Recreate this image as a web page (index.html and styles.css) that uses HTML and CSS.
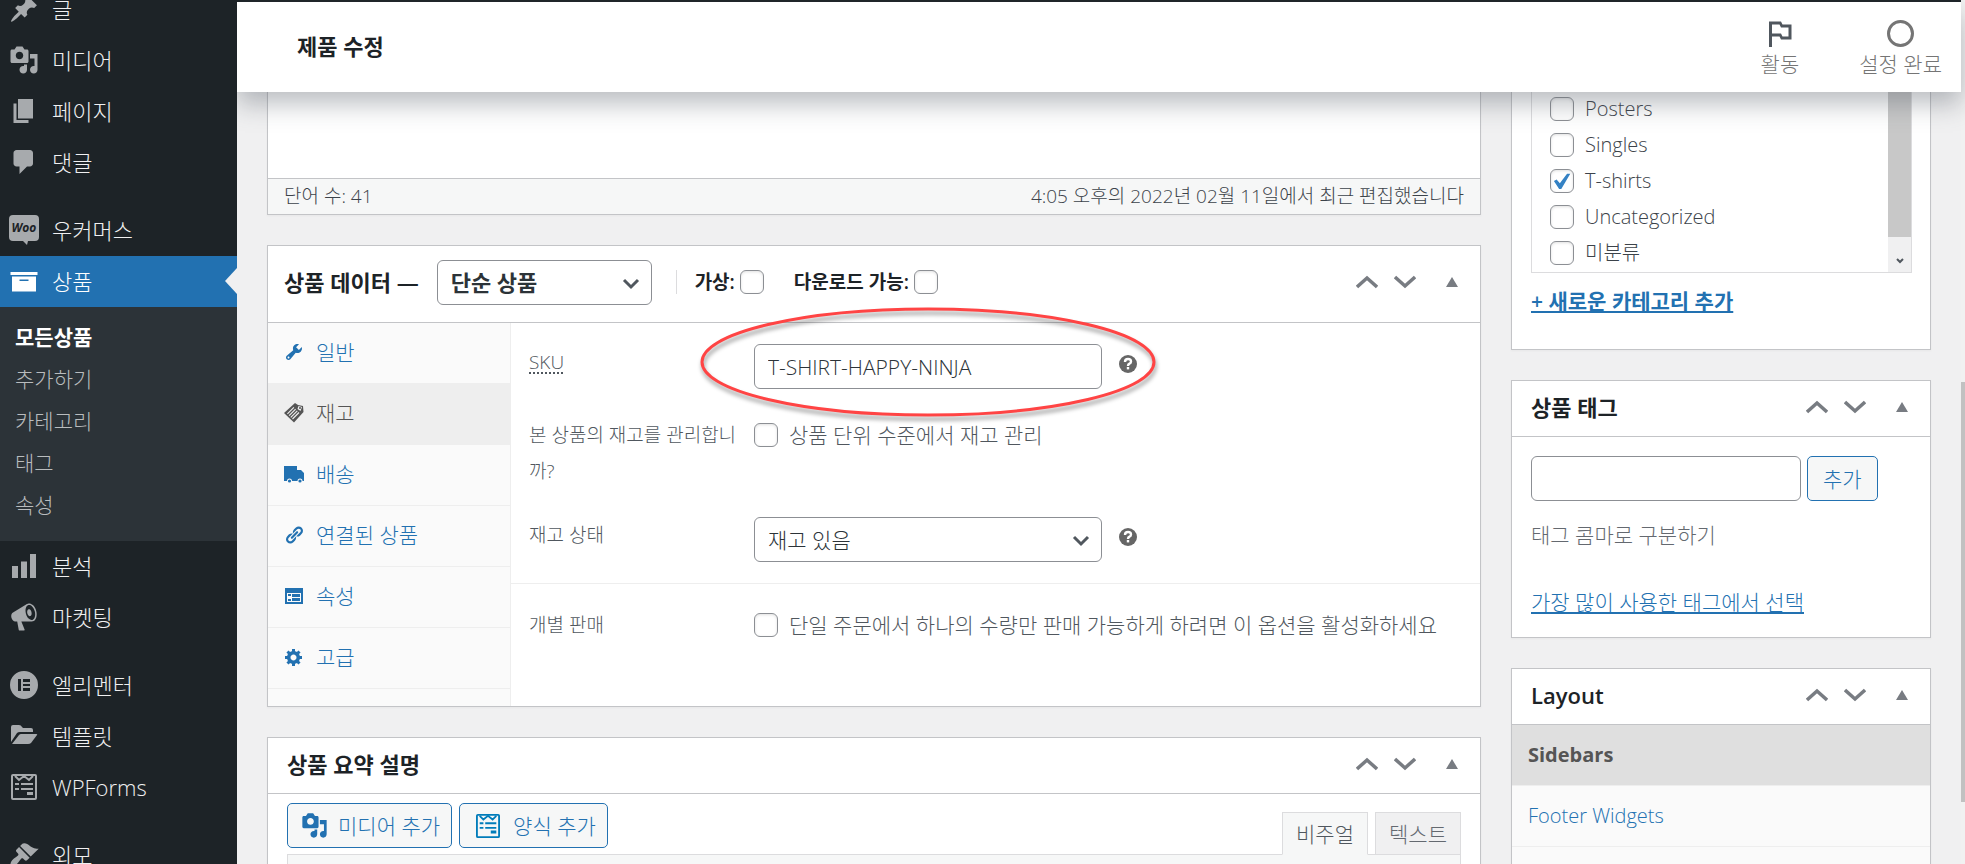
FILE: index.html
```html
<!DOCTYPE html>
<html lang="ko">
<head>
    <meta charset="UTF-8">
    <meta name="viewport" content="width=device-width, initial-scale=1.0">
    <title>제품 수정</title>
    <link rel="stylesheet" href="styles.css">
</head>
<body>
    <svg class="sprite" aria-hidden="true">
        <symbol id="media" viewBox="0 0 20 20"><path d="M13 11V4c0-.55-.45-1-1-1h-1.67L9 1H5L3.67 3H2c-.55 0-1 .45-1 1v7c0 .55.45 1 1 1h10c.55 0 1-.45 1-1zM7 4.5c1.38 0 2.5 1.12 2.5 2.5S8.38 9.5 7 9.5 4.5 8.38 4.5 7 5.62 4.5 7 4.5zM14 6h5v10.5c0 1.38-1.12 2.5-2.5 2.5S14 17.88 14 16.5s1.12-2.5 2.5-2.5c.17 0 .34.02.5.05V9h-3V6zm-4 8.05V13h2v3.5c0 1.38-1.12 2.5-2.5 2.5S7 17.88 7 16.5 8.12 14 9.5 14c.17 0 .34.02.5.05z"/></symbol>
        <symbol id="form" viewBox="0 0 26 26"><path fill="none" stroke="currentColor" stroke-width="2" d="M2 1h22q1 0 1 1v22q0 1-1 1H2q-1 0-1-1V2q0-1 1-1z"/><path fill="none" stroke="currentColor" stroke-width="2" d="M4 2l4 4 5-4 5 4 4-4"/><path d="M4 9h4v2H4zm6 0h12v2H10zM4 14h4v2H4zm6 0h12v2H10zm6 4h6v3h-6z"/></symbol>
        <symbol id="up" viewBox="0 0 22 14"><path fill="none" stroke="currentColor" stroke-width="3.500" d="M1 12l10-9 10 9"/></symbol>
        <symbol id="down" viewBox="0 0 22 14"><path fill="none" stroke="currentColor" stroke-width="3.500" d="M1 2l10 9 10-9"/></symbol>
        <symbol id="toggle" viewBox="0 0 12 10"><path d="M6 0l6 10H0z"/></symbol>
        <symbol id="arrow" viewBox="0 0 18 12"><path fill="none" stroke="currentColor" stroke-width="3" d="M2 2l7 7 7-7"/></symbol>
        <symbol id="help" viewBox="0 0 18 18"><circle cx="9" cy="9" r="9"/><path fill="none" stroke="#fff" stroke-width="2.400" d="M6 7q0-3 3-3t3 2.500q0 1.500-1.500 2.200T9 11"/><path fill="#fff" d="M7.800 12h2.400v2.400H7.800z"/></symbol>
    </svg>

    <nav class="menu">
        <ul class="menu-list">
            <li><a href="#"><svg class="icon" viewBox="0 0 20 20"><path d="M10.440 3.020l1.820-1.820 6.360 6.350-1.830 1.820c-1.050-.68-2.480-.57-3.410.36l-.75.75c-.92.93-1.040 2.350-.35 3.410l-1.830 1.820-2.410-2.410-2.800 2.790c-.42.42-3.380 2.710-3.800 2.290s1.860-3.390 2.280-3.810l2.790-2.790L4.100 9.360l1.830-1.820c1.050.69 2.480.57 3.400-.36l.75-.75c.93-.92 1.050-2.350.36-3.410z"/></svg>글</a></li>
            <li><a href="#"><svg class="icon"><use href="#media"/></svg>미디어</a></li>
            <li><a href="#"><svg class="icon" viewBox="0 0 20 20"><path d="M6 15V2h10v13H6zm-1 1h8v2H3V5h2v11z"/></svg>페이지</a></li>
            <li><a href="#"><svg class="icon" viewBox="0 0 20 20"><path d="M5 2h9c1.100 0 2 .9 2 2v7c0 1.100-.9 2-2 2h-2l-5 5v-5H5c-1.100 0-2-.9-2-2V4c0-1.100.9-2 2-2z"/></svg>댓글</a></li>
            <li class="separator"></li>
            <li><a href="#"><svg class="icon" viewBox="0 0 30 30"><path d="M4 0h22q4 0 4 4v18q0 4-4 4h-7l-1 4-4-4H4q-4 0-4-4V4q0-4 4-4z"/><text class="woo" x="15" y="17" text-anchor="middle">Woo</text></svg>우커머스</a></li>
            <li class="current">
                <a href="#"><svg class="icon" viewBox="0 0 20 20"><path d="M19 4v2H1V4h18zM2 7h16v10H2V7zm11 3V9H7v1h6z"/></svg>상품</a>
                <ul class="submenu">
                    <li><a class="active" href="#">모든상품</a></li>
                    <li><a href="#">추가하기</a></li>
                    <li><a href="#">카테고리</a></li>
                    <li><a href="#">태그</a></li>
                    <li><a href="#">속성</a></li>
                </ul>
            </li>
            <li><a href="#"><svg class="icon" viewBox="0 0 20 20"><path d="M18 18V2h-4v16h4zm-6 0V7H8v11h4zm-6 0v-8H2v8h4z"/></svg>분석</a></li>
            <li><a href="#"><svg class="icon" viewBox="0 0 20 20"><path fill-rule="evenodd" d="M18.150 5.940c.46 1.620.38 3.220-.02 4.480-.42 1.280-1.260 2.180-2.300 2.480-.16.06-.26.06-.4.06-.06.02-.12.02-.18.02-.06.02-.14.02-.22.02h-6.800l2.220 5.500c.02.14-.06.26-.14.34-.08.1-.24.16-.34.16H6.950c-.1 0-.26-.06-.34-.16-.08-.08-.16-.2-.14-.34l-1-5.500H4.250l-.02-.02c-.5.06-1.080-.18-1.540-.62s-.88-1.080-1.060-1.880c-.24-.8-.2-1.560-.02-2.200.18-.62.58-1.080 1.060-1.300l.02-.02 9-5.400c.1-.06.18-.1.24-.16.06-.04.14-.08.24-.12.16-.08.28-.12.5-.18 1.040-.3 2.240.1 3.220.98s1.840 2.240 2.260 3.860zm-2.580 5.980h-.02c.4-.1.74-.34 1.040-.7.58-.7.86-1.760.86-3.040 0-.64-.1-1.300-.28-1.980-.34-1.360-1.020-2.500-1.780-3.240s-1.680-1.100-2.460-.88c-.82.22-1.400.96-1.700 2-.32 1.040-.28 2.360.06 3.720.38 1.360 1 2.500 1.800 3.240.78.74 1.620 1.100 2.480.88zm-2.540-7.080c.22-.04.42-.02.62.04.38.16.76.48 1.020 1s.42 1.200.42 1.780c0 .3-.04.56-.12.8-.18.48-.44.84-.86.94-.34.1-.8-.06-1.140-.4s-.64-.86-.78-1.500c-.18-.62-.12-1.240.02-1.720s.48-.84.82-.94z"/></svg>마켓팅</a></li>
            <li class="separator"></li>
            <li><a href="#"><svg class="icon" viewBox="0 0 30 30"><path fill-rule="evenodd" d="M15 1a14 14 0 1 1 0 28 14 14 0 0 1 0-28zM9 9v12h3V9zm5 0v3h7V9zm0 5v2h7v-2zm0 4v3h7v-3z"/></svg>엘리멘터</a></li>
            <li><a href="#"><svg class="icon" viewBox="0 0 30 30"><path d="M2 21V6q0-2 2-2h6q2 0 3 2l1 1h8q2 0 2 2v2H11q-2 0-3 1z"/><path d="M3 23l7-9q1-1 2-1h15q2 0 1 1l-6 8q-1 1-3 1z"/></svg>템플릿</a></li>
            <li><a href="#"><svg class="icon icon-form"><use href="#form"/></svg>WPForms</a></li>
            <li class="separator"></li>
            <li><a href="#"><svg class="icon" viewBox="0 0 20 20"><path d="M14.480 11.060L7.410 3.990l1.500-1.500c.5-.56 2.300-.47 3.510.32 1.210.8 1.430 1.280 2.910 2.100 1.180.64 2.450 1.260 4.450.85zm-.71.71L6.700 4.700 4.930 6.470c-.39.39-.39 1.020 0 1.410l1.060 1.060c.39.39.39 1.030 0 1.420-.6.6-1.430 1.110-2.210 1.690-.35.26-.7.53-1.010.84C1.430 14.230.4 16.080 1.400 17.070c.99 1 2.840-.03 4.180-1.360.31-.31.58-.66.85-1.020.57-.78 1.080-1.610 1.690-2.210.39-.39 1.020-.39 1.410 0l1.060 1.060c.39.39 1.020.39 1.410 0z"/></svg>외모</a></li>
        </ul>
    </nav>

    <div class="page">
        <header class="header">
            <h1>제품 수정</h1>
            <div class="header-tabs">
                <button type="button"><svg class="flag" viewBox="3 3 18 18"><path d="M14 6l-1-2H5v17h2v-7h5l1 2h7V6h-6zm4 8h-4l-1-2H7V6h5l1 2h5v6z"/></svg>활동</button>
                <button type="button"><svg class="ring" viewBox="0 0 27 27"><circle cx="13.500" cy="13.500" r="12" fill="none" stroke="currentColor" stroke-width="3"/></svg>설정 완료</button>
            </div>
        </header>

        <div class="content">
            <main class="main">
                <section class="box editor">
                    <div class="editor-text"></div>
                    <div class="editor-status">
                        <span>단어 수: 41</span>
                        <span>4:05 오후의 2022년 02월 11일에서 최근 편집했습니다</span>
                    </div>
                </section>

                <section class="box">
                    <div class="box-head product-head">
                        <label class="product-type">상품 데이터 —
                            <span class="select">
                                <select><option>단순 상품</option></select>
                                <svg><use href="#arrow"/></svg>
                            </span>
                        </label>
                        <div class="type-options">
                            <label>가상:<input type="checkbox"></label>
                            <label>다운로드 가능:<input type="checkbox"></label>
                        </div>
                        <div class="actions">
                            <button type="button" aria-label="위로"><svg><use href="#up"/></svg></button>
                            <button type="button" aria-label="아래로"><svg><use href="#down"/></svg></button>
                            <button type="button" class="toggle" aria-label="접기"><svg><use href="#toggle"/></svg></button>
                        </div>
                    </div>
                    <div class="product-data">
                        <ul class="tabs">
                            <li><a href="#"><svg viewBox="0 0 20 20"><path fill-rule="evenodd" d="M16.680 9.770c-1.340 1.340-3.300 1.670-4.950.99l-5.410 6.520c-.99.99-2.590.99-3.580 0s-.99-2.590 0-3.570l6.520-5.420c-.68-1.650-.35-3.610.99-4.950 1.280-1.280 3.120-1.620 4.720-1.060l-2.890 2.890 2.820 2.820 2.860-2.870c.53 1.580.18 3.390-1.080 4.650zM3.810 16.210c.4.39 1.040.39 1.430 0 .4-.4.4-1.040 0-1.430-.39-.4-1.030-.4-1.430 0-.39.39-.39 1.030 0 1.430z"/></svg>일반</a></li>
                            <li class="active"><a href="#"><svg viewBox="0 0 20 20"><path fill-rule="evenodd" d="M11 0l3 2 5 1 .5 6L10 19.500 0 10zM9.500 4L3 10.500l.8.8L10.300 4.800zm1.700 1.700l-6.500 6.500.8.8L12 6.500zm1.700 1.700l-6.500 6.500.8.8 6.500-6.500zm1.700 1.700l-6.500 6.500.8.8 6.500-6.500zM14.500 3l-1 3 3 2 1.500-4z"/><circle cx="16" cy="5" r="1"/></svg>재고</a></li>
                            <li><a href="#"><svg viewBox="0 0 20 20"><path d="M0 2h13v4h4l3 3v8h-1.500a2.500 2.500 0 0 0-5 0H8a2.500 2.500 0 0 0-5 0H0z"/><circle cx="5.500" cy="17" r="1.600"/><circle cx="16" cy="17" r="1.600"/></svg>배송</a></li>
                            <li><a href="#"><svg viewBox="0 0 20 20"><path d="M17.740 2.760c1.680 1.690 1.680 4.410 0 6.100l-1.530 1.520c-1.120 1.120-2.700 1.470-4.140 1.090l2.620-2.610.76-.77.76-.76c.84-.84.84-2.200 0-3.040-.84-.85-2.200-.85-3.040 0l-.77.76-3.380 3.380c-.37-1.440-.02-3.020 1.100-4.140l1.520-1.530c1.690-1.680 4.420-1.680 6.100 0zM8.590 13.430l5.340-5.340c.42-.42.42-1.100 0-1.520-.44-.43-1.130-.39-1.530 0l-5.330 5.340c-.42.42-.42 1.100 0 1.520.44.43 1.130.39 1.520 0zm-.76 2.290l4.140-4.150c.38 1.440.03 3.020-1.090 4.140l-1.520 1.530c-1.690 1.680-4.410 1.680-6.100 0-1.680-1.680-1.680-4.420 0-6.100l1.530-1.520c1.120-1.120 2.700-1.470 4.140-1.100l-4.140 4.150c-.85.84-.85 2.200 0 3.050.84.84 2.200.84 3.040 0z"/></svg>연결된 상품</a></li>
                            <li><a href="#"><svg viewBox="0 0 20 20"><path fill-rule="evenodd" d="M1 2h18v16H1zM3 7v9h14V7z"/><path d="M4 8h3v2H4zm4 0h8v3H8zm-4 5h3v2H4zm4-1h8v3H8z"/></svg>속성</a></li>
                            <li><a href="#"><svg viewBox="0 0 20 20"><path fill-rule="evenodd" d="M18 12h-2.180c-.17.7-.44 1.350-.81 1.930l1.540 1.540-2.100 2.100-1.540-1.540c-.58.36-1.230.63-1.910.79V19H8v-2.180c-.68-.16-1.330-.43-1.910-.79l-1.540 1.540-2.120-2.120 1.540-1.540c-.36-.58-.63-1.230-.79-1.910H1V9.030h2.170c.16-.7.44-1.350.8-1.940L2.430 5.550l2.100-2.100 1.540 1.540c.58-.37 1.240-.64 1.930-.81V2h3v2.180c.68.16 1.330.43 1.910.79l1.540-1.540 2.120 2.120-1.540 1.540c.36.59.64 1.240.8 1.940H18V12zm-8.500 1.500c1.660 0 3-1.340 3-3s-1.340-3-3-3-3 1.340-3 3 1.340 3 3 3z"/></svg>고급</a></li>
                        </ul>
                        <div class="panel">
                            <div class="group">
                                <div class="field">
                                    <label for="sku"><abbr title="재고 유지 단위">SKU</abbr></label>
                                    <div class="control">
                                        <input type="text" id="sku" value="T-SHIRT-HAPPY-NINJA">
                                        <svg class="help"><use href="#help"/></svg>
                                        <svg class="mark" viewBox="0 0 460 120"><ellipse cx="230" cy="57" rx="226" ry="53"/></svg>
                                    </div>
                                </div>
                                <div class="field">
                                    <label for="manage">본 상품의 재고를 관리합니까?</label>
                                    <label class="check"><input type="checkbox" id="manage">상품 단위 수준에서 재고 관리</label>
                                </div>
                                <div class="field">
                                    <label for="stock">재고 상태</label>
                                    <div class="control">
                                        <span class="select">
                                            <select id="stock"><option>재고 있음</option></select>
                                            <svg><use href="#arrow"/></svg>
                                        </span>
                                        <svg class="help"><use href="#help"/></svg>
                                    </div>
                                </div>
                            </div>
                            <div class="group">
                                <div class="field">
                                    <label for="sold">개별 판매</label>
                                    <label class="check"><input type="checkbox" id="sold">단일 주문에서 하나의 수량만 판매 가능하게 하려면 이 옵션을 활성화하세요</label>
                                </div>
                            </div>
                        </div>
                    </div>
                </section>

                <section class="box">
                    <div class="box-head summary-head">
                        <h2>상품 요약 설명</h2>
                        <div class="actions">
                            <button type="button" aria-label="위로"><svg><use href="#up"/></svg></button>
                            <button type="button" aria-label="아래로"><svg><use href="#down"/></svg></button>
                            <button type="button" class="toggle" aria-label="접기"><svg><use href="#toggle"/></svg></button>
                        </div>
                    </div>
                    <div class="summary">
                        <div class="summary-tools">
                            <button type="button" class="button"><svg><use href="#media"/></svg>미디어 추가</button>
                            <button type="button" class="button button-form"><svg><use href="#form"/></svg>양식 추가</button>
                            <div class="modes">
                                <button type="button" class="active">비주얼</button>
                                <button type="button">텍스트</button>
                            </div>
                        </div>
                        <div class="summary-editor"></div>
                    </div>
                </section>
            </main>

            <aside class="side">
                <section class="box categories">
                    <div class="category-list">
                        <ul>
                            <li><label><input type="checkbox">Posters</label></li>
                            <li><label><input type="checkbox">Singles</label></li>
                            <li><label><input type="checkbox" checked>T-shirts</label></li>
                            <li><label><input type="checkbox">Uncategorized</label></li>
                            <li><label><input type="checkbox">미분류</label></li>
                        </ul>
                        <div class="list-scroll">
                            <div class="list-thumb"></div>
                            <svg viewBox="0 0 8 6"><path fill="none" stroke="currentColor" stroke-width="2" d="M1 1l3 3 3-3"/></svg>
                        </div>
                    </div>
                    <a class="add-category" href="#">+ 새로운 카테고리 추가</a>
                </section>

                <section class="box">
                    <div class="box-head">
                        <h2>상품 태그</h2>
                        <div class="actions">
                            <button type="button" aria-label="위로"><svg><use href="#up"/></svg></button>
                            <button type="button" aria-label="아래로"><svg><use href="#down"/></svg></button>
                            <button type="button" class="toggle" aria-label="접기"><svg><use href="#toggle"/></svg></button>
                        </div>
                    </div>
                    <div class="tags">
                        <div class="tag-add">
                            <input type="text" aria-label="상품 태그">
                            <button type="button" class="button">추가</button>
                        </div>
                        <p>태그 콤마로 구분하기</p>
                        <a href="#">가장 많이 사용한 태그에서 선택</a>
                    </div>
                </section>

                <section class="box">
                    <div class="box-head">
                        <h2>Layout</h2>
                        <div class="actions">
                            <button type="button" aria-label="위로"><svg><use href="#up"/></svg></button>
                            <button type="button" aria-label="아래로"><svg><use href="#down"/></svg></button>
                            <button type="button" class="toggle" aria-label="접기"><svg><use href="#toggle"/></svg></button>
                        </div>
                    </div>
                    <ul class="layout-list">
                        <li class="active"><a href="#">Sidebars</a></li>
                        <li><a href="#">Footer Widgets</a></li>
                        <li></li>
                    </ul>
                </section>
            </aside>
        </div>
    </div>

    <div class="scrollbar"><div class="thumb"></div></div>
</body>
</html>
```

FILE: styles.css
```css
* { box-sizing: border-box; }
body { margin: 0; display: flex; height: 100vh; overflow: hidden; background: #f0f0f1; color: #3c434a; font-family: "Open Sans", "Noto Sans CJK KR", sans-serif; font-size: 21px; font-weight: 300; line-height: 36px; }
h1, h2, p, ul { margin: 0; padding: 0; }
ul { list-style: none; }
a { color: #2271b1; }
svg { fill: currentColor; flex: none; }
button, input, select { font: inherit; color: inherit; margin: 0; }
button { cursor: pointer; }
.sprite { position: absolute; width: 0; height: 0; }

/* menu */
.menu { position: relative; z-index: 3; width: 237px; flex: none; background: #1d2327; overflow: hidden; }
.menu-list { margin-top: -16px; }
.menu-list a { display: flex; align-items: center; gap: 13px; height: 51px; padding: 0 0 2px 9px; color: #f0f0f1; font-size: 22px; text-decoration: none; }
.icon { width: 30px; height: 30px; color: #a7aaad; }
.icon-form { padding: 2px; }
.woo { font-size: 12px; font-weight: 700; font-style: italic; fill: #1d2327; }
.separator { height: 17px; }
.current > a { position: relative; background: #2271b1; color: #fff; }
.current > a .icon { color: #fff; }
.current > a::after { content: ""; position: absolute; right: 0; top: 12px; border: 13px solid transparent; border-left: 0; border-right: 12px solid #f0f0f1; }
.submenu { background: #2c3338; padding: 10px 0 14px; }
.submenu a { height: 42px; padding-left: 15px; color: #b9bcbe; font-size: 21px; }
.submenu a.active { color: #fff; font-weight: 700; }

/* header */
.page { flex: 1; min-width: 0; display: flex; flex-direction: column; border-top: 2px solid #1d2327; }
.header { position: relative; z-index: 2; flex: none; display: flex; justify-content: space-between; align-items: center; height: 90px; padding: 0 19px 2px 60px; background: #fff; box-shadow: 0 12px 24px rgba(85, 93, 102, .4); }
.header h1 { font-size: 22px; font-weight: 600; color: #1d2327; }
.header-tabs { display: flex; gap: 60px; padding-top: 6px; }
.header-tabs button { display: flex; flex-direction: column; align-items: center; gap: 3px; padding: 0; border: 0; background: none; color: #757575; line-height: 28px; }
.flag { width: 27px; height: 27px; color: #50575e; }
.ring { width: 27px; height: 27px; }

/* boxes */
.content { flex: 1; min-height: 0; display: flex; gap: 30px; padding: 0 30px; }
.main { flex: 1; min-width: 0; display: flex; flex-direction: column; gap: 30px; }
.side { width: 420px; flex: none; display: flex; flex-direction: column; gap: 30px; }
.box { flex: none; background: #fff; border: 1px solid #c3c4c7; box-shadow: 0 1px 2px rgba(0, 0, 0, .04); }
.box-head { display: flex; align-items: center; height: 56px; padding: 0 0 4px 19px; border-bottom: 1px solid #c3c4c7; }
.box-head h2 { font-size: 22px; font-weight: 600; color: #1d2327; }
.actions { display: flex; margin-left: auto; color: #787c82; }
.actions button { display: flex; align-items: center; justify-content: center; width: 38px; height: 36px; padding: 0; border: 0; background: none; }
.actions button.toggle { width: 56px; }
.actions svg { width: 22px; height: 14px; }
.actions .toggle svg { width: 12px; height: 10px; }

input[type=text], select { height: 45px; padding: 0 13px; border: 1px solid #8c8f94; border-radius: 6px; background: #fff; color: #2c3338; }
input[type=checkbox] { appearance: none; flex: none; width: 24px; height: 24px; border: 1px solid #8c8f94; border-radius: 6px; background: #fff; box-shadow: inset 0 1px 3px rgba(0, 0, 0, .12); }
input[type=checkbox]:checked::before { content: ""; display: block; width: 18px; height: 18px; margin: 2px; background: #3582c4; clip-path: polygon(5% 50%, 20% 42%, 38% 62%, 78% 10%, 96% 10%, 46% 94%, 34% 94%); }
.select { position: relative; display: block; }
.select select { appearance: none; display: block; width: 100%; }
.select svg { position: absolute; right: 12px; top: 18px; width: 18px; height: 12px; color: #50575e; pointer-events: none; }
.button { display: flex; align-items: center; height: 45px; padding: 0 15px; border: 1px solid #2271b1; border-radius: 5px; background: #f6f7f7; color: #2271b1; }

/* editor */
.editor { border-top: 0; }
.editor-text { height: 86px; }
.editor-status { display: flex; justify-content: space-between; padding: 0 16px; border-top: 1px solid #c3c4c7; background: #f6f7f7; font-size: 19px; line-height: 35px; }

/* product data */
.product-head { height: 77px; padding-left: 16px; }
.product-type { display: flex; align-items: center; gap: 18px; font-size: 22px; font-weight: 600; color: #1d2327; }
.product-type .select { width: 215px; }
.type-options { display: flex; align-items: center; gap: 30px; height: 24px; margin-left: 24px; padding-left: 18px; border-left: 1px solid #dcdcde; font-size: 19px; font-weight: 600; color: #1d2327; }
.type-options label { display: flex; align-items: center; gap: 5px; }
.product-data { display: flex; }
.tabs { width: 243px; flex: none; padding-bottom: 17px; background: #fafafa; border-right: 1px solid #eee; }
.tabs a { display: flex; align-items: center; gap: 12px; height: 61px; padding: 0 0 2px 16px; border-bottom: 1px solid #eee; text-decoration: none; }
.tabs svg { width: 20px; height: 20px; }
.tabs .active a { background: #eee; color: #555; }
.panel { flex: 1; min-width: 0; }
.group { padding: 7px 18px; }
.group + .group { padding-top: 9px; border-top: 1px solid #eee; }
.field { display: grid; grid-template-columns: 215px 1fr; column-gap: 10px; align-items: start; padding: 14px 0; font-size: 19px; color: #50575e; }
.field abbr { text-decoration: underline dotted; text-decoration-thickness: 2px; text-underline-offset: 3px; }
.control { position: relative; display: flex; gap: 17px; font-size: 21px; }
.control input, .control .select { width: 348px; }
.check { display: flex; align-items: center; gap: 11px; font-size: 21px; }
.help { width: 18px; height: 18px; margin-top: 11px; color: #666; }
.mark { position: absolute; left: -56px; top: -39px; width: 460px; height: 120px; fill: none; stroke: #ff4444; stroke-width: 3px; filter: drop-shadow(1px 4px 2px rgba(0, 0, 0, .4)); pointer-events: none; }

/* summary */
.summary { padding: 9px 19px 0; }
.summary-tools { display: flex; gap: 7px; }
.summary .button { padding: 0 11px 0 13px; gap: 10px; }
.summary .button svg { width: 27px; height: 27px; }
.summary .button-form { padding-left: 16px; gap: 13px; }
.summary .button-form svg { width: 24px; height: 24px; color: #007cba; }
.modes { display: flex; align-items: flex-end; gap: 7px; margin: 9px 0 0 auto; }
.modes button { width: 86px; height: 43px; padding: 0; border: 1px solid #dcdcde; background: #f0f0f1; color: #646970; font-size: 21px; }
.modes .active { position: relative; background: #f6f7f7; border-bottom-color: #f6f7f7; color: #50575e; }
.summary-editor { height: 60px; margin-top: -1px; border: 1px solid #dcdcde; background: #f6f7f7; }

/* side */
.categories { border-top: 0; padding: 0 18px 30px 19px; }
.category-list { display: flex; justify-content: space-between; margin-bottom: 10px; border: 1px solid #dcdcde; border-top: 0; }
.category-list ul { padding-left: 18px; }
.category-list label { display: flex; align-items: center; gap: 11px; height: 36px; padding-bottom: 2px; font-size: 20px; }
.list-scroll { display: flex; flex-direction: column; align-items: center; width: 23px; background: #f0f0f1; color: #50575e; }
.list-thumb { flex: 1; width: 100%; background: #c8c8c8; }
.list-scroll svg { width: 8px; height: 6px; margin: 21px 0 8px; }
.add-category { display: block; font-weight: 600; }
.tags { padding: 19px 19px 17px; }
.tag-add { display: flex; gap: 6px; }
.tag-add input { width: 270px; }
.tags p { margin: 16px 0 31px; color: #646970; }
.layout-list li { height: 61px; padding-left: 16px; background: #fafafa; border-bottom: 1px solid #eee; font-size: 20px; line-height: 60px; }
.layout-list a { text-decoration: none; }
.layout-list .active { background: #dfdfdf; }
.layout-list .active a { color: #555; font-weight: 700; }

.scrollbar { width: 4px; flex: none; padding-top: 382px; background: #f1f1f1; }
.thumb { height: 420px; background: #c1c1c1; }
```
